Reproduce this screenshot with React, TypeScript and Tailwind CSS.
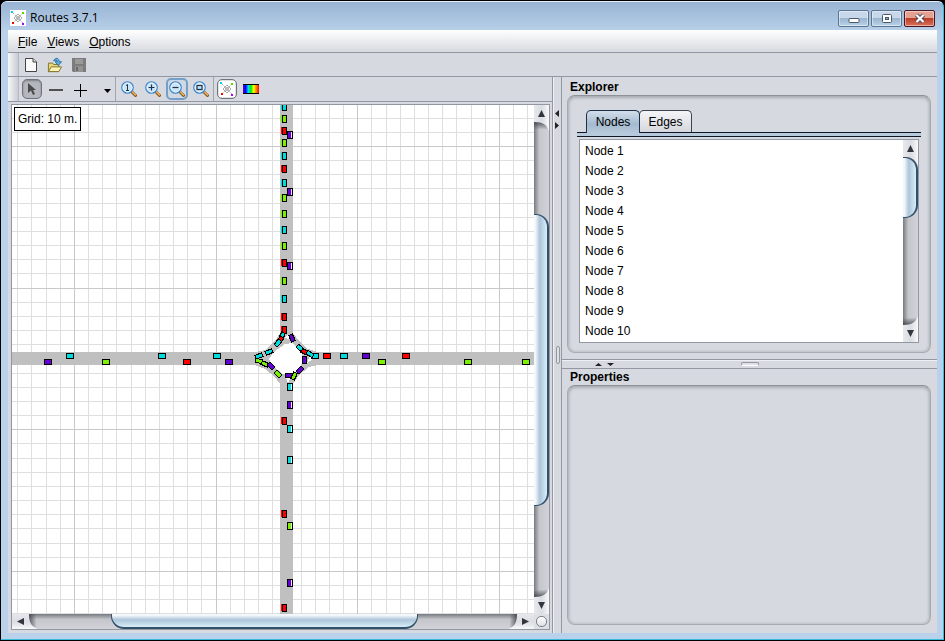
import React, { useState } from "react";

type Dir = "up" | "down" | "left" | "right";

const COLORS: Record<string, string> = { C: "#00dcdc", G: "#78f000", R: "#ff0000", P: "#6400d2" };

/* x, y, colour */
type Car = [number, number, string];
const southbound: Car[] = [
  [284, 107, "C"], [284, 119, "G"], [284, 131, "R"], [284, 143, "G"], [284, 156, "C"], [284, 169, "R"],
  [284, 183, "C"], [284, 198, "G"], [284, 214, "G"], [284, 230, "C"], [284, 246, "G"], [284, 263, "R"],
  [284, 281, "G"], [284, 299, "C"], [284, 317, "R"], [284, 330, "R"], [284, 421, "R"], [284, 514, "R"],
  [284, 608, "R"],
];
const northbound: Car[] = [
  [290, 135, "P"], [290, 192, "P"], [290, 266, "P"], [290, 387, "C"], [290, 405, "P"], [290, 429, "C"],
  [290, 460, "C"], [290, 526, "G"], [290, 583, "P"],
];
const across: Car[] = [
  [48, 362, "P"], [70, 356, "C"], [106, 362, "G"], [162, 356, "C"], [187, 362, "R"], [217, 356, "C"],
  [229, 362, "P"], [315, 356, "C"], [327, 356, "R"], [344, 356, "C"], [366, 356, "P"], [382, 362, "G"],
  [406, 356, "R"], [468, 362, "G"], [526, 362, "G"],
];
/* x, y, colour, heading in degrees */
const circling: [number, number, string, number][] = [
  [282, 336, "C", -65], [280, 340, "R", -50], [278, 343, "C", -48], [269, 352, "C", -25], [259, 356, "C", -22],
  [259, 361, "G", 4], [265, 364, "G", 25], [271, 366, "P", 45], [278, 374, "G", 45], [289, 375, "P", 0],
  [294, 376, "G", -65], [300, 370, "P", -45], [304, 360, "P", 90], [292, 338, "P", 65], [300, 348, "C", 42],
  [305, 352, "R", 25], [310, 354, "C", 30],
];

function RoadMap() {
  const lines = Array.from({ length: 150 }, (_, i) => i - 4);
  const pos = (base: number, i: number) => Math.floor(base + (i * 425) / 30 + 0.4);
  const shade = (dark: boolean) => (dark ? "#c8c8c8" : "#dfdfdf");
  return (
    <svg className="absolute inset-0 h-full w-full bg-white" shapeRendering="crispEdges" aria-label="Road network">
      <g transform="translate(-12 -105)">
        {[false, true].map((dark) => (
          <g key={String(dark)} fill={shade(dark)}>
            {lines.filter((i) => (i % 10 === 0) === dark).map((i) => (
              <g key={i}>
                <rect x={pos(74, i)} y="100" width="1" height="2000" />
                <rect x="0" y={pos(146, i)} width="2200" height="1" />
              </g>
            ))}
          </g>
        ))}
        <g fill="#c0c0c0">
          <rect x="280" y="100" width="13" height="2000" />
          <rect x="0" y="352" width="2200" height="13" />
          <path d="M280 333L275 341L265 350L255 352V365L265 369L274 376L280 384H293L299 375L309 367L318 365V352L308 349L299 341L293 333Z" />
        </g>
        <path d="M285 344L292 343L301 352L304 359L300 367L292 375L283 374L273 366L269 359L274 352Z" fill="white" />
        <path d="M285 338L288 334L291 340M286 378L291 378L288 383M307 363L312 360L310 356" fill="white" />
        {across.map(([x, y, c]) => (
          <g key={`${x}-${y}`}>
            <rect x={x - 3} y={y - 2} width="6" height="4" fill={COLORS[c]} />
            <rect x={x - 3.5} y={y - 2.5} width="7" height="5" fill="none" stroke="black" />
          </g>
        ))}
        {southbound.map(([x, y, c]) => (
          <g key={`${x}-${y}`}>
            <rect x={x - 3} y={y - 4} width="5" height="7" fill={COLORS[c]} />
            <rect x={x - 1.5} y={y - 3.5} width="4" height="7" fill="none" stroke="black" />
          </g>
        ))}
        {northbound.map(([x, y, c]) => (
          <g key={`${x}-${y}`}>
            <rect x={x - 2} y={y - 3} width="5" height="6" fill="#e8e8e8" />
            <rect x={x - 2} y={y - 3} width="3" height="6" fill={COLORS[c]} />
            <rect x={x - 2.5} y={y - 3.5} width="5" height="7" fill="none" stroke="black" />
          </g>
        ))}
        {circling.map(([x, y, c, a]) => (
          <rect key={`${x}-${y}`} x={-3.5} y={-2} width="7" height="4" fill={COLORS[c]} stroke="black"
            transform={`translate(${x} ${y}) rotate(${a})`} />
        ))}
      </g>
    </svg>
  );
}

const END_TRANSFORM: Record<Dir, string> = {
  up: "",
  down: "matrix(1 0 0 -1 0 17)",
  left: "matrix(0 1 1 0 0 0)",
  right: "matrix(0 1 -1 0 17 0)",
};

function ScrollEnd({ dir }: { dir: Dir }) {
  const flat = dir === "left" || dir === "right";
  const id = `end-${dir}`;
  return (
    <button type="button" aria-label={`Scroll ${dir}`} className={flat ? "h-[15px] w-[17px] shrink-0" : "h-[17px] w-[15px] shrink-0"}>
      <svg className={flat ? "block h-[15px] w-[17px] overflow-visible" : "block h-[17px] w-[15px] overflow-visible"}>
        <defs>
          <linearGradient id={id}>
            <stop offset="0" stopColor="#e6e8ec" />
            <stop offset="0.5" stopColor="#dadde3" />
            <stop offset="0.7" stopColor="#e4e6ea" />
            <stop offset="1" stopColor="#f8f9fa" />
          </linearGradient>
          <linearGradient id={`${id}-s`} x2="0" y2="1">
            <stop offset="0.5" stopColor="#33363c" stopOpacity="0.85" />
            <stop offset="1" stopColor="#55585e" stopOpacity="0" />
          </linearGradient>
        </defs>
        <g transform={END_TRANSFORM[dir]}>
          <path d="M0 8H9L14 25C9 23 4 24 0 24Z" fill={`url(#${id}-s)`} />
          <path d="M0 0H15V26C13 20 9 17 0 17Z" fill={`url(#${id})`} />
          <path d="M7.5 5L11 12H4Z" fill="#33363c" />
        </g>
      </svg>
    </button>
  );
}

function ScrollBar({ flat = false, before, thumb, after }: { flat?: boolean; before: number; thumb: number; after: number }) {
  return (
    <div
      className={
        flat
          ? "flex h-[15px] min-w-0 bg-linear-to-b from-[#777a80] via-[#c4c6cb] via-35% to-[#d2d3d9]"
          : "flex w-[15px] min-h-0 flex-col bg-linear-to-r from-[#777a80] via-[#c4c6cb] via-35% to-[#d2d3d9]"
      }
    >
      <ScrollEnd dir={flat ? "left" : "up"} />
      <div className={flat ? "flex flex-1" : "flex flex-1 flex-col"}>
        <div style={{ flexGrow: before }} />
        <div
          style={{ flexGrow: thumb }}
          className={
            flat
              ? "relative z-10 rounded-b-[13px] border-x border-b-2 border-[#33506b] bg-linear-to-b from-[#f4f8fb] from-10% via-[#adc5da] via-45% to-[#d8eef8]"
              : "relative z-10 rounded-r-[13px] border-y border-r-2 border-[#33506b] bg-linear-to-r from-[#f4f8fb] from-10% via-[#adc5da] via-45% to-[#d8eef8]"
          }
        />
        <div style={{ flexGrow: after }} />
      </div>
      <ScrollEnd dir={flat ? "right" : "down"} />
    </div>
  );
}

function NetworkIcon() {
  return (
    <svg width="16" height="16" viewBox="0 0 16 16" className="bg-white">
      <g fill="none" stroke="#aaa">
        <path d="M3 3L13 13M13 3L3 13" strokeDasharray="2 1" />
        <path d="M8 4L12 8L8 12L4 8Z" />
        <circle cx="8" cy="8" r="1.5" />
      </g>
      <rect x="1" y="1" width="2" height="2" fill="#00d2ff" />
      <rect x="12" y="2" width="2" height="2" fill="#50e000" />
      <rect x="2" y="12" width="2" height="2" fill="#f00" />
      <rect x="12" y="13" width="2" height="2" fill="#b400ff" />
    </svg>
  );
}

function Magnifier({ children }: { children: React.ReactNode }) {
  return (
    <svg width="16" height="16" viewBox="0 0 16 16" fill="none">
      <path d="M10.5 10.5L14.5 14.5" stroke="#8a5a20" strokeWidth="3" strokeLinecap="round" />
      <path d="M11 10.5L14.5 14" stroke="#f0b860" strokeWidth="1.2" strokeLinecap="round" />
      <circle cx="6.5" cy="6.5" r="5.7" fill="#c8e4fa" stroke="#3c86cc" strokeWidth="1.3" />
      <circle cx="6.5" cy="6.5" r="4.5" stroke="#eef8ff" />
      {children}
    </svg>
  );
}

function Tool({ label, look = "", children }: { label: string; look?: string; children: React.ReactNode }) {
  return (
    <button type="button" aria-label={label} title={label} className="flex h-6 w-6 shrink-0 items-center justify-center">
      <span className={`flex items-center justify-center rounded-[5px] ${look}`}>{children}</span>
    </button>
  );
}

const Grip = () => <div className="mr-px w-[11px] shrink-0 border-r border-[#b4b8c0] bg-linear-to-r from-[#f6f7f9] to-[#c9ccd3]" />;
const Separator = () => <div className="mr-px w-px shrink-0 bg-[#a0a4ad]" />;

function WindowButton({ label, look, children }: { label: string; look: string; children: React.ReactNode }) {
  return (
    <button type="button" aria-label={label}
      className={`flex h-[17px] w-[31px] items-center justify-center rounded-[2px] border shadow-[inset_0_0_0_1px_rgba(255,255,255,0.45)] ${look}`}>
      <svg width="14" height="11" viewBox="0 0 14 11">{children}</svg>
    </button>
  );
}

function Panel({ children }: { children?: React.ReactNode }) {
  return (
    <div className="flex min-h-0 flex-1 flex-col rounded-lg border border-[#a8abb1] border-t-[#8e9298] px-[9px] pt-3.5 pb-[9px] shadow-[inset_0_1px_3px_1px_rgba(100,104,112,0.4)]">
      {children}
    </div>
  );
}

const plainWin = "border-[#5c7590] bg-linear-to-b from-[#c6d8ea] from-45% via-[#9cb6d0] via-50% to-[#b8d2e8]";
const menus = ["File", "Views", "Options"];
const nodes = Array.from({ length: 10 }, (_, i) => `Node ${i + 1}`);
const edges = Array.from({ length: 10 }, (_, i) => `Edge ${i + 1}`);

export default function App() {
  const [tab, setTab] = useState("Nodes");
  return (
    <div className="flex h-screen flex-col overflow-hidden bg-black pl-px font-['Liberation_Sans',Arial,sans-serif] text-[12px] leading-4 text-black select-none">
      <div className="mt-px mb-px flex min-h-0 flex-1 flex-col rounded-t-md border-t border-r border-b border-t-[#e4eef8] border-r-[#35bcd8] border-b-[#35bcd8] bg-[#b9d1ea] bg-linear-to-b from-[#98b4d3] to-[#b9d1ea] to-[30px] pr-1.5 pb-1.5 pl-[7px] mr-px">
        <header className="flex h-7 shrink-0 items-center pt-1 pl-0.5">
          <NetworkIcon />
          <h1 className="ml-1 flex-1 font-['Open_Sans','Noto_Sans',sans-serif] text-[12px]">Routes 3.7.1</h1>
          <div className="flex gap-0.5 pr-0.5">
            <WindowButton label="Minimize" look={plainWin}>
              <rect x="2" y="5.5" width="10" height="4" rx="1" fill="#fff" stroke="#4a5868" />
            </WindowButton>
            <WindowButton label="Maximize" look={plainWin}>
              <rect x="2.5" y="1.5" width="9" height="8" rx="1" fill="#fff" stroke="#4a5868" />
              <rect x="5.5" y="4.5" width="3" height="2" fill="#8aa6c4" stroke="#4a5868" />
            </WindowButton>
            <WindowButton label="Close" look="border-[#4c1420] bg-linear-to-b from-[#e4a090] from-45% via-[#bc3c28] via-50% to-[#d87058]">
              <path d="M3.5 2L10.5 9M10.5 2L3.5 9" stroke="#4a4c60" strokeWidth="4" />
              <path d="M3.5 2L10.5 9M10.5 2L3.5 9" stroke="#fff" strokeWidth="2.2" />
            </WindowButton>
          </div>
        </header>

        <main className="flex min-h-0 flex-1 flex-col bg-[#d6d9df]">
          <nav className="flex h-[23px] shrink-0 items-center border-b border-[#9297a1] bg-linear-to-b from-white to-[#d6d9df] pl-[5px]">
            {menus.map((m) => (
              <button type="button" key={m} className="px-[5px] pt-0.5">
                <span className="underline">{m[0]}</span>{m.slice(1)}
              </button>
            ))}
          </nav>

          <div className="flex h-6 shrink-0 border-b border-[#9297a1]">
            <Grip />
            <div className="-ml-px flex">
              <Tool label="New">
                <svg width="14" height="16" viewBox="0 0 14 16">
                  <path d="M1.5 1.5H9L12.5 5V14.5H1.5Z" fill="#fafafa" stroke="#444" />
                  <path d="M9 1.5V5H12.5" fill="#ddd" stroke="#444" />
                </svg>
              </Tool>
              <Tool label="Open">
                <svg width="16" height="16" viewBox="0 0 17 17">
                  <path d="M1.5 15.5V6.5H6L7 8H12.5V15.5Z" fill="#e8d878" stroke="#807030" />
                  <path d="M1.5 15.5L4.5 10.5H15.5L12.5 15.5Z" fill="#fbf3b4" stroke="#807030" />
                  <path d="M7 4C9 0 13 1 13 5H15.5L12 9L8.500 5H11C10.500 3 9 3 7 4Z" fill="#58b4e4" stroke="#1c5c94" strokeWidth="0.8" />
                </svg>
              </Tool>
              <Tool label="Save">
                <svg width="14" height="14" viewBox="0 0 14 14">
                  <path d="M0 0H14V14H1L0 13Z" fill="#7c7c7c" />
                  <rect x="3" y="1" width="8" height="5" fill="#9a9a9a" />
                  <rect x="3" y="8" width="8" height="6" fill="#939393" />
                  <rect x="4" y="9" width="2" height="4" fill="#6a6a6a" />
                </svg>
              </Tool>
            </div>
          </div>

          <div className="grid min-h-0 flex-1 grid-cols-[minmax(0,545fr)_8px_minmax(0,376fr)] grid-rows-[minmax(0,1fr)]">
            <section className="flex min-w-0 flex-col border-r border-[#9297a1]">
              <div className="flex h-[25px] shrink-0 border-b border-[#9297a1]">
                <Grip />
                <Tool label="Select" look="h-5 w-5 border border-[#6f737b] bg-[#b4b7bd] shadow-[inset_0_1px_2px_rgba(0,0,0,0.3)]">
                  <svg width="10" height="14" viewBox="0 0 10 14">
                    <path d="M1 1V11L4 8.500L6 13L8 12L6 8H9Z" fill="#4a4a4a" />
                  </svg>
                </Tool>
                <Tool label="Add edge"><span className="mt-0.5 h-0.5 w-3.5 bg-[#505050]" /></Tool>
                <Tool label="Add node">
                  <svg width="13" height="13" className="mt-0.5"><path d="M6.5 0V13M0 6.5H13" stroke="black" /></svg>
                </Tool>
                <button type="button" aria-label="More tools" className="flex h-6 w-[23px] items-center justify-end pr-1">
                  <svg width="7" height="4" className="mt-1"><path d="M0 0H7L3.500 4Z" fill="black" /></svg>
                </button>
                <Separator />
                <Tool label="Actual size">
                  <Magnifier><path d="M5 4.500L6.500 3.500V9.500M5 9.500H8" stroke="#234" /></Magnifier>
                </Tool>
                <Tool label="Zoom in">
                  <Magnifier><path d="M6.500 3.500V9.500M3.500 6.500H9.500" stroke="#234" strokeWidth="1.200" /></Magnifier>
                </Tool>
                <Tool label="Zoom out" look="h-[22px] w-[22px] border-2 border-[#739fc9] bg-[#d0d8e3]">
                  <Magnifier><path d="M3.500 6.500H9.500" stroke="#234" strokeWidth="1.200" /></Magnifier>
                </Tool>
                <Tool label="Zoom to fit">
                  <Magnifier><rect x="4" y="4.500" width="5" height="4" stroke="#234" strokeWidth="1.200" /></Magnifier>
                </Tool>
                <Separator />
                <Tool label="Show network" look="h-5 w-5 border border-[#6f737b] bg-white shadow-[inset_0_0_2px_rgba(0,0,0,0.4)]"><NetworkIcon /></Tool>
                <Tool label="Colour scale" look="h-2.5 w-4 rounded-none! border-y border-black bg-[linear-gradient(to_right,#6000c0,#0000ff,#00e0ff,#00f000,#ffff00,#ff8000,#ff0000)]">{null}</Tool>
              </div>

              <div className="mt-0.5 mr-0.5 mb-[3px] ml-[3px] grid min-h-0 flex-1 grid-cols-[minmax(0,1fr)_15px] grid-rows-[minmax(0,1fr)_15px] border border-[#9297a1]">
                <div className="relative overflow-hidden">
                  <RoadMap />
                  <div className="absolute top-0.5 left-0.5 border border-black bg-white px-[3px] py-[3px]">Grid: 10 m.</div>
                </div>
                <ScrollBar before={92} thumb={291} after={91} />
                <ScrollBar flat before={82} thumb={307} after={99} />
                <button type="button" aria-label="Overview" className="flex items-center justify-center bg-[#dcdfe4]">
                  <span className="h-[11px] w-[11px] rounded-[5px] border border-[#7c8087] bg-linear-to-b from-white to-[#dde0e5]" />
                </button>
              </div>
            </section>

            <div className="relative border-l border-[#eef0f3]">
              <svg width="6" height="24" className="absolute top-8 left-0" fill="#222">
                <path d="M5 1V8L1 4.500ZM1 13V20L5 16.500Z" />
              </svg>
              <div className="absolute top-1/2 left-0.5 h-[18px] w-1 -translate-y-1/2 rounded-[2px] border border-[#9297a1] bg-[#dfe1e6]" />
            </div>

            <div className="grid min-w-0 grid-rows-[minmax(0,282fr)_10px_minmax(0,264fr)] border-l border-[#9297a1]">
              <section className="flex min-h-0 flex-col pt-0.5 pr-1.5 pb-1.5 pl-[5px]">
                <h2 className="h-4 shrink-0 pl-[3px] font-bold">Explorer</h2>
                <Panel>
                  <div role="tablist" className="flex h-[22px] shrink-0 pl-[9px]">
                    {["Nodes", "Edges"].map((t) => (
                      <button type="button" role="tab" key={t} aria-selected={tab === t} onClick={() => setTab(t)}
                        className={
                          tab === t
                            ? "relative z-10 h-[23px] w-[54px] rounded-t-[5px] border border-b-0 border-[#1c3048] bg-linear-to-b from-[#d3dfea] via-[#a5bacf] via-60% to-[#b6cadb]"
                            : "-ml-px h-[22px] w-[53px] rounded-t-[5px] border border-b-0 border-[#3c4450] bg-linear-to-b from-[#f4f5f7] to-[#d4d7dd]"
                        }>
                        {t}
                      </button>
                    ))}
                  </div>
                  <div className="h-[5px] shrink-0 border-y border-[#101828] bg-[#b6cadb]" />
                  <div className="mx-0.5 mt-0.5 flex min-h-0 flex-1 border border-[#9297a1]">
                    <ul className="min-w-0 flex-1 overflow-hidden bg-white pt-px pl-[5px]">
                      {(tab === "Nodes" ? nodes : edges).map((n) => <li key={n} className="h-5 leading-5">{n}</li>)}
                    </ul>
                    <ScrollBar before={0} thumb={60} after={109} />
                  </div>
                </Panel>
              </section>

              <div className="relative border-y border-[#9297a1] shadow-[inset_0_1px_0_#eef0f3]">
                <svg width="22" height="6" className="absolute top-0.5 left-8" fill="#222">
                  <path d="M1 4H8L4.500 1ZM13 1H20L16.500 4Z" />
                </svg>
                <div className="absolute top-0.5 left-1/2 h-1 w-[18px] -translate-x-1/2 rounded-[2px] border border-[#9297a1] border-b-white bg-[#dfe1e6]" />
              </div>

              <section className="flex min-h-0 flex-col pr-1.5 pb-2 pl-[5px]">
                <h2 className="h-4 shrink-0 pl-[3px] font-bold">Properties</h2>
                <Panel />
              </section>
            </div>
          </div>
        </main>
      </div>
    </div>
  );
}
